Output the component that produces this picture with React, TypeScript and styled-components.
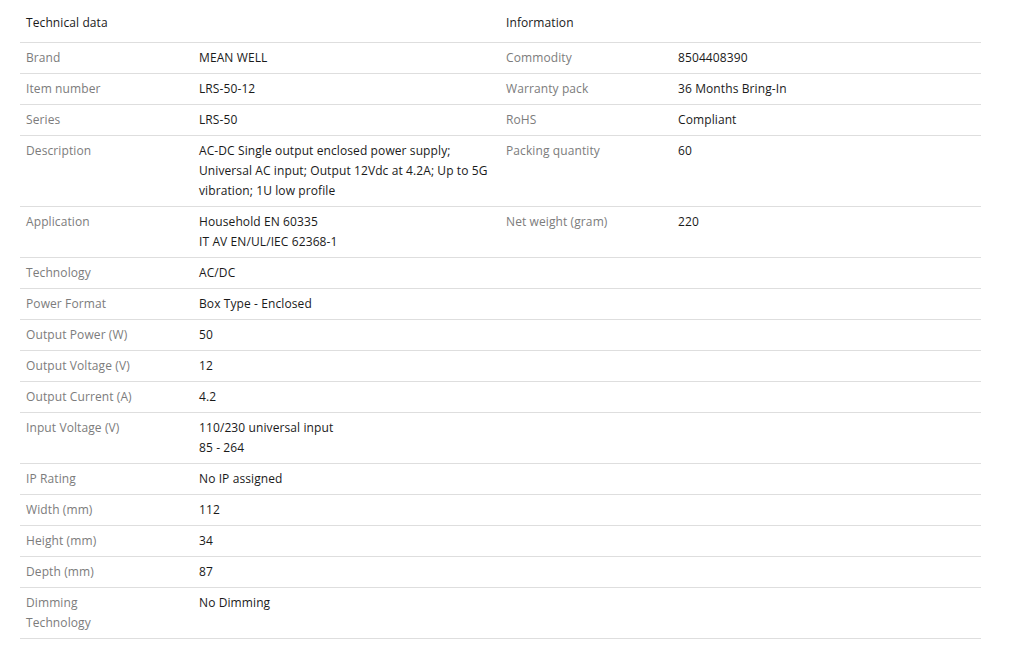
import React from "react";
import styled, { createGlobalStyle } from "styled-components";

const Global = createGlobalStyle`
  html, body { margin: 0; padding: 0; background: #fff; }
  body { font-family: "Open Sans", "Noto Sans", Arial, sans-serif; }
`;

const Page = styled.div`
  padding: 0 32px 0 20px;
`;

const Table = styled.div`
  display: grid;
  grid-template-columns: 173px 307px 172px 1fr;
  width: 961px;
  font-size: 12px;
  letter-spacing: 0.1px;
`;

const Row = styled.div<{ $head?: boolean }>`
  display: contents;
  & > div {
    border-bottom: 1px solid #dedede;
    padding: ${(p) => (p.$head ? "13px 6px 9px" : "5px 6px")};
  }
`;

const Cell = styled.div<{ $kind: "label" | "value" | "head" }>`
  line-height: 20px;
  color: ${(p) => (p.$kind === "label" ? "#7c7c7c" : "#1a1a1a")};
  white-space: nowrap;
`;

type R = { l1: React.ReactNode; key: string; v1: React.ReactNode; l2?: string; v2?: React.ReactNode };

const rows: R[] = [
  { key: "brand", l1: "Brand", v1: "MEAN WELL", l2: "Commodity", v2: "8504408390" },
  { key: "item", l1: "Item number", v1: "LRS-50-12", l2: "Warranty pack", v2: "36 Months Bring-In" },
  { key: "series", l1: "Series", v1: "LRS-50", l2: "RoHS", v2: "Compliant" },
  {
    key: "desc",
    l1: "Description",
    v1: (
      <>
        AC-DC Single output enclosed power supply;
        <br />
        Universal AC input; Output 12Vdc at 4.2A; Up to 5G
        <br />
        vibration; 1U low profile
      </>
    ),
    l2: "Packing quantity",
    v2: "60",
  },
  {
    key: "app",
    l1: "Application",
    v1: (
      <>
        Household EN 60335
        <br />
        IT AV EN/UL/IEC 62368-1
      </>
    ),
    l2: "Net weight (gram)",
    v2: "220",
  },
  { key: "tech", l1: "Technology", v1: "AC/DC" },
  { key: "fmt", l1: "Power Format", v1: "Box Type - Enclosed" },
  { key: "pw", l1: "Output Power (W)", v1: "50" },
  { key: "ov", l1: "Output Voltage (V)", v1: "12" },
  { key: "oc", l1: "Output Current (A)", v1: "4.2" },
  {
    key: "iv",
    l1: "Input Voltage (V)",
    v1: (
      <>
        110/230 universal input
        <br />
        85 - 264
      </>
    ),
  },
  { key: "ip", l1: "IP Rating", v1: "No IP assigned" },
  { key: "w", l1: "Width (mm)", v1: "112" },
  { key: "h", l1: "Height (mm)", v1: "34" },
  { key: "d", l1: "Depth (mm)", v1: "87" },
  {
    key: "dim",
    l1: (
      <>
        Dimming
        <br />
        Technology
      </>
    ),
    v1: "No Dimming",
  },
];

export default function App() {
  return (
    <Page>
      <Global />
      <Table>
        <Row $head>
          <Cell $kind="head">Technical data</Cell>
          <Cell $kind="head" />
          <Cell $kind="head">Information</Cell>
          <Cell $kind="head" />
        </Row>
        {rows.map((r) => (
          <Row key={r.key}>
            <Cell $kind="label">{r.l1}</Cell>
            <Cell $kind="value">{r.v1}</Cell>
            <Cell $kind="label">{r.l2 ?? ""}</Cell>
            <Cell $kind="value">{r.v2 ?? ""}</Cell>
          </Row>
        ))}
      </Table>
    </Page>
  );
}
